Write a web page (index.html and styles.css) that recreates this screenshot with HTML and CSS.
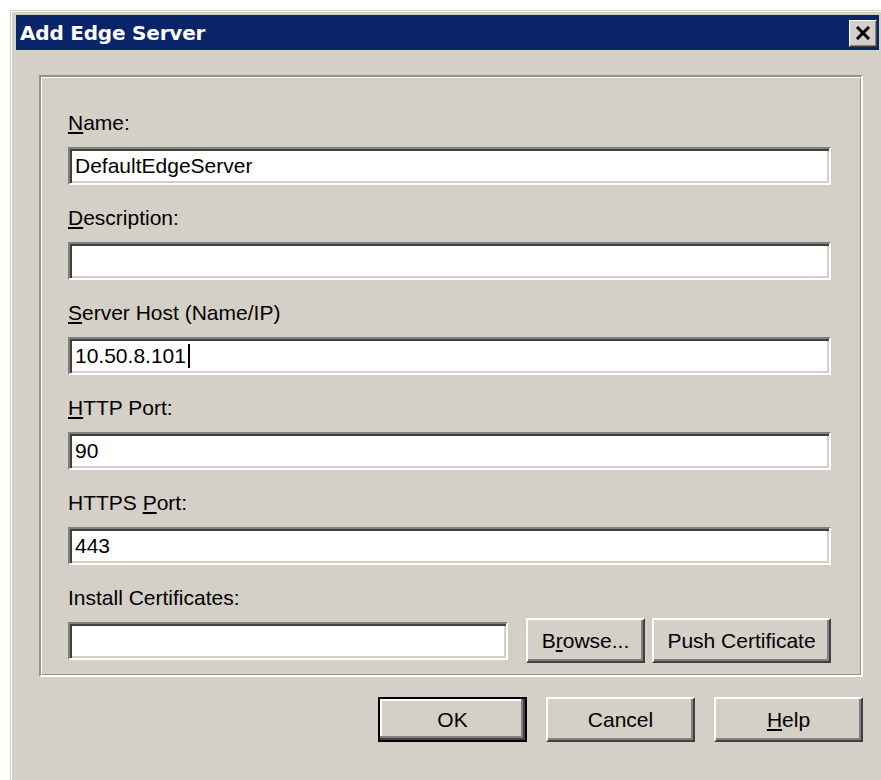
FILE: index.html
```html
<!DOCTYPE html>
<html lang="en">
<head>
<meta charset="utf-8">
<title>Add Edge Server</title>
<link rel="stylesheet" href="styles.css">
</head>
<body>
<div class="window">
  <div class="titlebar">
    <span class="title">Add Edge Server</span>
    <button class="close" type="button" aria-label="Close">
      <svg width="16" height="14" viewBox="0 0 16 14">
        <path d="M2 1 L14 13 M14 1 L2 13" stroke="#000" stroke-width="3" fill="none"/>
      </svg>
    </button>
  </div>
  <div class="client">
    <div class="group">
      <div class="field">
        <div class="label"><u>N</u>ame:</div>
        <div class="input">DefaultEdgeServer</div>
      </div>
      <div class="field">
        <div class="label"><u>D</u>escription:</div>
        <div class="input"></div>
      </div>
      <div class="field">
        <div class="label"><u>S</u>erver Host (Name/IP)</div>
        <div class="input">10.50.8.101<span class="caret"></span></div>
      </div>
      <div class="field">
        <div class="label"><u>H</u>TTP Port:</div>
        <div class="input">90</div>
      </div>
      <div class="field">
        <div class="label">HTTPS <u>P</u>ort:</div>
        <div class="input">443</div>
      </div>
      <div class="label label-tight">Install Certificates:</div>
      <div class="cert-row">
        <div class="input input-grow"></div>
        <button class="btn btn-browse" type="button">B<u>r</u>owse...</button>
        <button class="btn btn-push" type="button">Push Certificate</button>
      </div>
    </div>
    <div class="actions">
      <button class="btn btn-default" type="button">OK</button>
      <button class="btn" type="button">Cancel</button>
      <button class="btn" type="button"><u>H</u>elp</button>
    </div>
  </div>
</div>
</body>
</html>
```

FILE: styles.css
```css
html, body {
  margin: 0;
  padding: 0;
  height: 100%;
  overflow: hidden;
  background: #ffffff;
}

body {
  font-family: "Liberation Sans", Arial, sans-serif;
  font-size: 21px;
  color: #000;
}

/* Classic window frame */
.window {
  box-sizing: border-box;
  margin: 10px 0 0 10px;
  width: 880px;
  height: 790px;
  padding: 4px 0 0 5px;
  background: #d4d0c8;
  border-left: 1px solid #d4d0c8;
  border-top: 1px solid #d4d0c8;
  box-shadow: inset 1px 1px #ffffff;
}

.titlebar {
  width: 863px;
  height: 35px;
  background: #0a246a;
  display: flex;
  align-items: center;
  justify-content: space-between;
  padding: 0 2px 0 4px;
  box-sizing: border-box;
}

.title {
  font-family: "DejaVu Sans", Verdana, sans-serif;
  font-weight: bold;
  font-size: 20px;
  color: #ffffff;
  letter-spacing: -0.2px;
}

.close {
  box-sizing: border-box;
  width: 28px;
  height: 27px;
  padding: 0;
  margin-top: 1px;
  background: #d4d0c8;
  border: 1px solid;
  border-color: #ffffff #404040 #404040 #ffffff;
  box-shadow: inset -1px -1px #808080;
  display: flex;
  align-items: center;
  justify-content: center;
}

.client {
  width: 863px;
  box-sizing: border-box;
  padding: 25px 16px 0 23px;
}

/* Etched group frame */
.group {
  border: 2px solid;
  border-color: #959289 #ffffff #ffffff #959289;
  box-shadow: inset 1px 1px #ffffff, inset -1px -1px #959289;
  padding: 34px 30px 12px 27px;
}

.field {
  margin-bottom: 21px;
}

.label {
  line-height: 24px;
  height: 24px;
  margin-bottom: 12px;
  white-space: nowrap;
}

.label-tight {
  margin-bottom: 8px;
}

u {
  text-decoration: underline;
  text-underline-offset: 2px;
  text-decoration-thickness: 2px;
}

/* Sunken edit box */
.input {
  box-sizing: border-box;
  height: 38px;
  background: #ffffff;
  border: 2px solid;
  border-color: #808080 #ffffff #ffffff #808080;
  box-shadow: inset 2px 2px #404040, inset -2px -2px #d4d0c8;
  padding: 0 5px;
  display: flex;
  align-items: center;
  white-space: nowrap;
}

.caret {
  display: inline-block;
  width: 2px;
  height: 24px;
  margin-left: 2px;
  background: #000;
}

.cert-row {
  display: flex;
  align-items: center;
  height: 45px;
}

.input-grow {
  flex: 1;
  margin-right: 18px;
}

/* Raised push button */
.btn {
  box-sizing: border-box;
  width: 149px;
  height: 45px;
  padding: 0;
  background: #d4d0c8;
  font-family: "Liberation Sans", Arial, sans-serif;
  font-size: 21px;
  color: #000;
  border: 2px solid;
  border-color: #ffffff #404040 #404040 #ffffff;
  box-shadow: inset -2px -2px #808080;
  white-space: nowrap;
}

.btn-browse {
  width: 119px;
  margin-right: 7px;
}

.btn-push {
  width: 179px;
}

.btn-default {
  border: 2px solid #000;
  box-shadow: inset -2px -2px #404040, inset -4px -4px #808080, inset 2px 2px #ffffff;
}

.actions {
  display: flex;
  justify-content: flex-end;
  gap: 19px;
  margin-top: 20px;
}
```
